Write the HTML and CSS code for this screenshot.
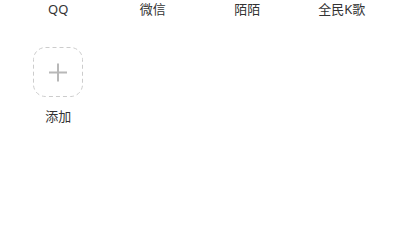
FILE: index.html
```html
<!DOCTYPE html>
<html lang="zh">
<head>
<meta charset="utf-8">
<link rel="stylesheet" href="styles.css">
</head>
<body>
<div class="page">
  <nav class="tabs">
    <span class="tab">QQ</span>
    <span class="tab">微信</span>
    <span class="tab">陌陌</span>
    <span class="tab">全民K歌</span>
  </nav>
  <div class="grid">
    <div class="item">
      <div class="add-box">
        <svg class="add-svg" width="50" height="50" viewBox="0 0 50 50">
          <rect x="0.5" y="0.5" width="49" height="49" rx="12" ry="12" fill="none" stroke="#cccccc" stroke-width="1" stroke-dasharray="4 3"/>
          <path d="M16 25.5 H34 M25 16.5 V34.5" stroke="#b8b8b8" stroke-width="2" fill="none"/>
        </svg>
      </div>
      <span class="label">添加</span>
    </div>
  </div>
</div>
</body>
</html>
```
FILE: styles.css
```css
html, body {
  margin: 0;
  padding: 0;
  background: #ffffff;
}
body {
  font-family: "Noto Sans", "Noto Sans CJK SC", sans-serif;
  color: #333333;
  font-size: 13px;
}
.page {
  width: 400px;
  height: 230px;
  padding: 0 11px;
  box-sizing: border-box;
}
.tabs {
  display: grid;
  grid-template-columns: repeat(4, 1fr);
  height: 18px;
  line-height: 18px;
}
.tab {
  text-align: center;
}
.grid {
  display: grid;
  grid-template-columns: repeat(4, 1fr);
  padding-top: 29px;
}
.item {
  display: flex;
  flex-direction: column;
  align-items: center;
}
.add-box {
  width: 50px;
  height: 50px;
}
.add-svg {
  display: block;
}
.label {
  margin-top: 10px;
  line-height: 18px;
}
```
